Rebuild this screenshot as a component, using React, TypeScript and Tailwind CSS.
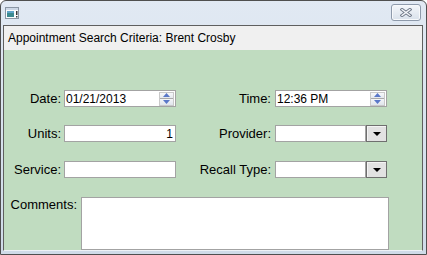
import React from "react";

const font = { fontFamily: '"Liberation Sans", Arial, sans-serif' };

const Spinner = () => (
  <div className="w-[15px] h-[14px] mr-[1px] flex flex-col border border-[#c9c9c9] bg-[#eef0f3]">
    <div className="flex-1 flex items-center justify-center bg-linear-to-b from-[#f7f8fa] to-[#e4e8ee]">
      <svg width="7" height="4" viewBox="0 0 7 4">
        <path d="M0 4 L3.5 0 L7 4 Z" fill="#5a78c8" />
      </svg>
    </div>
    <div className="h-[1px] bg-[#a9a9a9]" />
    <div className="flex-1 flex items-center justify-center bg-linear-to-b from-[#f3f5f8] to-[#e0e5ec]">
      <svg width="7" height="4" viewBox="0 0 7 4">
        <path d="M0 0 L3.5 4 L7 0 Z" fill="#5a78c8" />
      </svg>
    </div>
  </div>
);

const SpinInput = ({ value }: { value: string }) => (
  <div className="w-[112px] h-[17px] bg-white border border-[#a3a3a3] flex items-center">
    <span className="flex-1 pl-[1px] text-[12px] leading-[14px] text-black">{value}</span>
    <Spinner />
  </div>
);

const TextInput = ({ value = "", right = false }: { value?: string; right?: boolean }) => (
  <div
    className={`w-[112px] h-[17px] bg-white border border-[#a3a3a3] flex items-center text-[12px] leading-[14px] text-black ${
      right ? "justify-end pr-[2px]" : "pl-[1px]"
    }`}
  >
    {value}
  </div>
);

const Combo = () => (
  <div className="w-[112px] h-[17px] flex">
    <div className="flex-1 bg-white border border-[#a3a3a3]" />
    <div className="w-[21px] h-[17px] border border-[#6f6f6f] bg-[#e2e2e2] flex items-center justify-center shadow-[inset_1px_1px_0_#f4f4f4]">
      <svg width="8" height="4" viewBox="0 0 8 4">
        <path d="M0 0 L8 0 L4 4 Z" fill="#000" />
      </svg>
    </div>
  </div>
);

const Row = ({
  top,
  left,
  leftField,
  right,
  rightField,
}: {
  top: string;
  left: string;
  leftField: React.ReactNode;
  right: string;
  rightField: React.ReactNode;
}) => (
  <div className={`flex items-center ${top}`}>
    <div className="w-[57px] text-right text-[13px] leading-[15px] text-black whitespace-nowrap">{left}</div>
    <div className="ml-[3px]">{leftField}</div>
    <div className="w-[95px] text-right text-[13px] leading-[15px] text-black whitespace-nowrap">{right}</div>
    <div className="ml-[4px]">{rightField}</div>
  </div>
);

export default function App() {
  return (
    <div className="w-[427px] h-[255px] overflow-hidden" style={font}>
      <div className="w-[427px] h-[255px] border border-[#4f4f4f] rounded-t-[6px] bg-linear-to-b from-[#e1e9f3] to-[#cfdbe8] flex flex-col">
        {/* title bar */}
        <div className="h-[24px] flex justify-between items-start pl-[4px] pr-[5px]">
          <svg className="mt-[6px]" width="15" height="12" viewBox="0 0 15 12">
            <rect x="0.5" y="0.5" width="13" height="11" fill="#fafbfc" stroke="#8a96a4" />
            <rect x="1" y="1" width="12" height="2" fill="#cdd8e6" />
            <rect x="2" y="4" width="7" height="6" fill="#3c8a8f" />
            <rect x="2" y="4" width="7" height="2" fill="#5fa4c8" />
            <rect x="11" y="4" width="1.5" height="4" fill="#3a3a3a" />
            <rect x="11" y="9" width="1.5" height="1.5" fill="#3a3a3a" />
          </svg>
          <div className="mt-[3px] w-[30px] h-[17px] rounded-[3px] border border-[#8e9aab] bg-linear-to-b from-[#f4f7fa] to-[#d9e1eb] flex items-center justify-center shadow-[inset_0_0_0_1px_#f7f9fb]">
            <svg width="12" height="9" viewBox="0 0 12 9">
              <path d="M2 1.5 L10 7.5 M10 1.5 L2 7.5" stroke="#6d7786" strokeWidth="3.2" strokeLinecap="square" />
              <path d="M2 1.5 L10 7.5 M10 1.5 L2 7.5" stroke="#f5f7fa" strokeWidth="1.3" strokeLinecap="square" />
            </svg>
          </div>
        </div>
        {/* client */}
        <div className="ml-[2px] mr-[3px] mb-[3px] flex-1 border border-[#5f5f5f] border-b-[#eef2f6] flex flex-col">
          <div className="h-[24px] bg-[#f0f0f0] flex items-center pl-[4px] text-[12px] leading-[14px] text-black">
            Appointment Search Criteria: Brent Crosby
          </div>
          <div className="flex-1 bg-[#c0dcc0] overflow-hidden">
            <Row
              top="mt-[40px]"
              left="Date:"
              leftField={<SpinInput value="01/21/2013" />}
              right="Time:"
              rightField={<SpinInput value="12:36 PM" />}
            />
            <Row
              top="mt-[18px]"
              left="Units:"
              leftField={<TextInput value="1" right />}
              right="Provider:"
              rightField={<Combo />}
            />
            <Row
              top="mt-[19px]"
              left="Service:"
              leftField={<TextInput />}
              right="Recall Type:"
              rightField={<Combo />}
            />
            <div className="flex items-start mt-[19px]">
              <div className="w-[73px] text-right text-[13px] leading-[15px] text-black">Comments:</div>
              <div className="ml-[4px] w-[308px] h-[53px] bg-white border border-[#a3a3a3]" />
            </div>
          </div>
        </div>
      </div>
    </div>
  );
}
